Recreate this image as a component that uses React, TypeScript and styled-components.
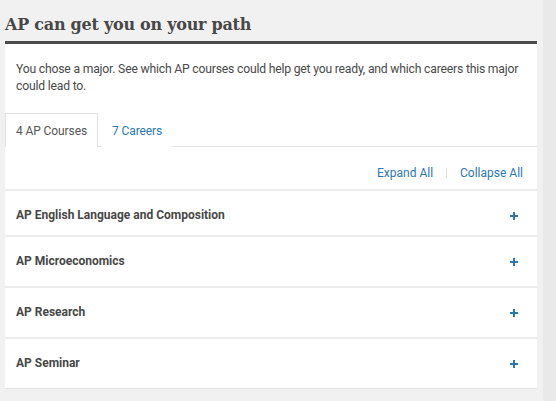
import React from "react";
import styled, { createGlobalStyle } from "styled-components";

const Global = createGlobalStyle`
  html, body { margin: 0; padding: 0; }
  body {
    background: #f1f1f1;
    font-family: Roboto, "Open Sans", Arial, sans-serif;
    color: #4a4a4a;
    width: 556px;
    height: 401px;
    overflow: hidden;
  }
`;

const Page = styled.div`
  display: flex;
  width: 556px;
  height: 401px;
`;

const Main = styled.div`
  width: 532px;
  padding-left: 5px;
  padding-right: 6px;
`;

const Gutter = styled.div`
  flex: 1;
  background: #e9e9e9;
`;

const Title = styled.h2`
  margin: 0;
  padding-top: 14px;
  height: 27px;
  font-family: "DejaVu Serif", serif;
  font-weight: 700;
  font-size: 16px;
  letter-spacing: -0.25px;
  line-height: 22px;
  color: #474747;
  border-bottom: 3px solid #4b4b4b;
`;

const Panel = styled.div`
  background: #fff;
`;

const Intro = styled.p`
  margin: 0;
  padding: 17px 11px 0 11px;
  font-size: 12.2px;
  letter-spacing: -0.2px;
  line-height: 17px;
  color: #4a4a4a;
`;

const TabRow = styled.div`
  display: flex;
  margin-top: 18px;
  height: 33px;
  border-bottom: 1px solid #e4e4e4;
`;

const Tab = styled.div<{ $active?: boolean }>`
  display: flex;
  align-items: center;
  box-sizing: border-box;
  height: 34px;
  padding: 0 10px;
  white-space: nowrap;
  font-size: 12px;
  letter-spacing: -0.1px;
  color: ${(p) => (p.$active ? "#555" : "#2a78b1")};
  background: #fff;
  border: 1px solid ${(p) => (p.$active ? "#e4e4e4" : "transparent")};
  border-bottom: none;
  margin-left: ${(p) => (p.$active ? "0" : "3px")};
`;

const Toolbar = styled.div`
  display: flex;
  justify-content: flex-end;
  align-items: center;
  gap: 13px;
  height: 44px;
  padding-right: 14px;
  padding-top: 10px;
  box-sizing: border-box;
  border-bottom: 2px solid #ececec;
`;

const LinkText = styled.span`
  font-size: 12px;
  color: #2a78b1;
`;

const Sep = styled.span`
  width: 1px;
  height: 10px;
  background: #dcdcdc;
`;

const Row = styled.div<{ $h: number }>`
  display: flex;
  justify-content: space-between;
  align-items: flex-start;
  box-sizing: border-box;
  height: ${(p) => p.$h}px;
  padding: 16px 18px 0 11px;
  border-bottom: 2px solid #ececec;
  &:last-child {
    border-bottom: 1px solid #e2e2e2;
  }
`;

const RowTitle = styled.span`
  font-size: 12px;
  font-weight: 700;
  line-height: 17px;
  color: #474747;
`;

const Plus = styled.svg`
  margin-top: 4px;
  width: 10px;
  height: 10px;
`;

const PlusIcon = () => (
  <Plus viewBox="0 0 10 10">
    <path d="M5 1v8M1 5h8" stroke="#2a78b1" strokeWidth="2" />
  </Plus>
);

const courses = [
  { name: "AP English Language and Composition", h: 46 },
  { name: "AP Microeconomics", h: 51 },
  { name: "AP Research", h: 51 },
  { name: "AP Seminar", h: 50 },
];

export default function App() {
  return (
    <>
      <Global />
      <Page>
        <Main>
          <Title>AP can get you on your path</Title>
          <Panel>
            <Intro>
              You chose a major. See which AP courses could help get you ready, and which careers this major
              could lead to.
            </Intro>
            <TabRow>
              <Tab $active>4 AP Courses</Tab>
              <Tab>7 Careers</Tab>
            </TabRow>
            <Toolbar>
              <LinkText>Expand All</LinkText>
              <Sep />
              <LinkText>Collapse All</LinkText>
            </Toolbar>
            {courses.map((c) => (
              <Row key={c.name} $h={c.h}>
                <RowTitle>{c.name}</RowTitle>
                <PlusIcon />
              </Row>
            ))}
          </Panel>
        </Main>
        <Gutter />
      </Page>
    </>
  );
}
